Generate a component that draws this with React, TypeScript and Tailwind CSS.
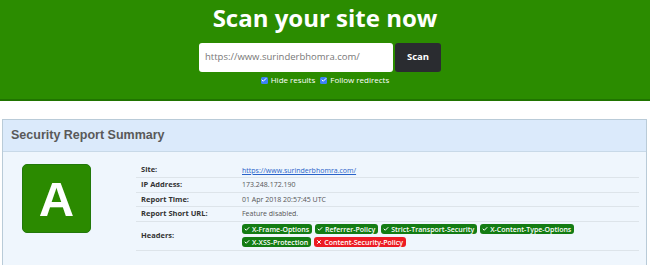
import { Check, X } from 'lucide-react'

const rows = [
  { label: 'Site:', value: 'https://www.surinderbhomra.com/', link: true },
  { label: 'IP Address:', value: '173.248.172.190' },
  { label: 'Report Time:', value: '01 Apr 2018 20:57:45 UTC' },
  { label: 'Report Short URL:', value: 'Feature disabled.' },
]

const headers = [
  { name: 'X-Frame-Options', ok: true },
  { name: 'Referrer-Policy', ok: true },
  { name: 'Strict-Transport-Security', ok: true },
  { name: 'X-Content-Type-Options', ok: true },
  { name: 'X-XSS-Protection', ok: true },
  { name: 'Content-Security-Policy', ok: false },
]

function Badge({ name, ok }: { name: string; ok: boolean }) {
  return (
    <span
      className={`inline-flex items-center gap-[2px] h-[10px] pl-[2px] pr-[3px] rounded-[3px] text-white text-[7px] font-semibold leading-none ${
        ok ? 'bg-[#137c13]' : 'bg-[#ec1c24]'
      }`}
    >
      {ok ? <Check size={6} strokeWidth={4} /> : <X size={6} strokeWidth={4} />}
      {name}
    </span>
  )
}

export default function App() {
  return (
    <div className="w-[650px] h-[265px] bg-white overflow-hidden font-['Open_Sans',sans-serif]">

      {/* ── Scan header ── */}
      <div className="h-[101px] bg-[#2b8c00] border-b-2 border-[#207400] pt-[2px] flex flex-col items-center">
        <h1 className="text-[24px] leading-[32px] font-bold text-white">Scan your site now</h1>
        <div className="flex gap-[2px] mt-[9px] mr-[10px]">
          <div className="w-[194px] h-[29px] bg-white rounded-[3px] flex items-center px-[6px] text-[9.5px] text-[#777]">
            https://www.surinderbhomra.com/
          </div>
          <button className="w-[46px] h-[29px] bg-[#2a2c30] rounded-[3px] text-white text-[9.5px] font-bold">
            Scan
          </button>
        </div>
        <div className="flex items-center mt-[2px] text-[8px] leading-[12px] text-white">
          <span className="w-[7px] h-[7px] bg-[#3b82f6] rounded-[1.5px] flex items-center justify-center mr-[3px]">
            <Check size={6} strokeWidth={4} className="text-white" />
          </span>
          Hide results
          <span className="w-[7px] h-[7px] bg-[#3b82f6] rounded-[1.5px] flex items-center justify-center ml-[5px] mr-[3px]">
            <Check size={6} strokeWidth={4} className="text-white" />
          </span>
          Follow redirects
        </div>
      </div>

      {/* ── Report panel ── */}
      <div className="ml-[2px] mr-[3px] mt-[18px] border border-[#b9cbd8] bg-[#eff6fd]">
        <div className="h-[32px] bg-[#dbeafb] border-b border-[#c8d9e8] flex items-center px-[8px]">
          <h2 className="font-['Liberation_Sans',sans-serif] text-[12.5px] font-bold text-[#595959]">
            Security Report Summary
          </h2>
        </div>

        <div className="flex pl-[19px] pr-[7px] pt-[11px] pb-[14px]">
          <div className="w-[69px] h-[69px] mt-[1px] rounded-[5px] bg-[#2b8a00] border border-[#22780a] flex items-center justify-center">
            <span className="font-['Liberation_Sans',sans-serif] text-[49px] font-bold text-white leading-none pt-[2px]">A</span>
          </div>

          <table className="ml-[45px] flex-1 border-collapse text-[7.5px]">
            <tbody>
              {rows.map((r, i) => (
                <tr key={r.label} className={i > 0 ? 'border-t border-[#dde4ea]' : ''}>
                  <td className="w-[106px] h-[14.5px] pl-[5px] font-bold text-[#333] leading-none">{r.label}</td>
                  <td className="h-[14.5px] text-[7px] text-[#555] leading-none">
                    {r.link ? <span className="text-[#2a63c9] underline">{r.value}</span> : r.value}
                  </td>
                </tr>
              ))}
              <tr className="border-t border-b border-[#dde4ea]">
                <td className="w-[106px] h-[29px] pl-[5px] font-bold text-[#333] leading-none">Headers:</td>
                <td className="h-[29px]">
                  <div className="flex flex-wrap gap-x-[3px] gap-y-[3px] w-[340px]">
                    {headers.map(h => <Badge key={h.name} {...h} />)}
                  </div>
                </td>
              </tr>
            </tbody>
          </table>
        </div>
      </div>
    </div>
  )
}
